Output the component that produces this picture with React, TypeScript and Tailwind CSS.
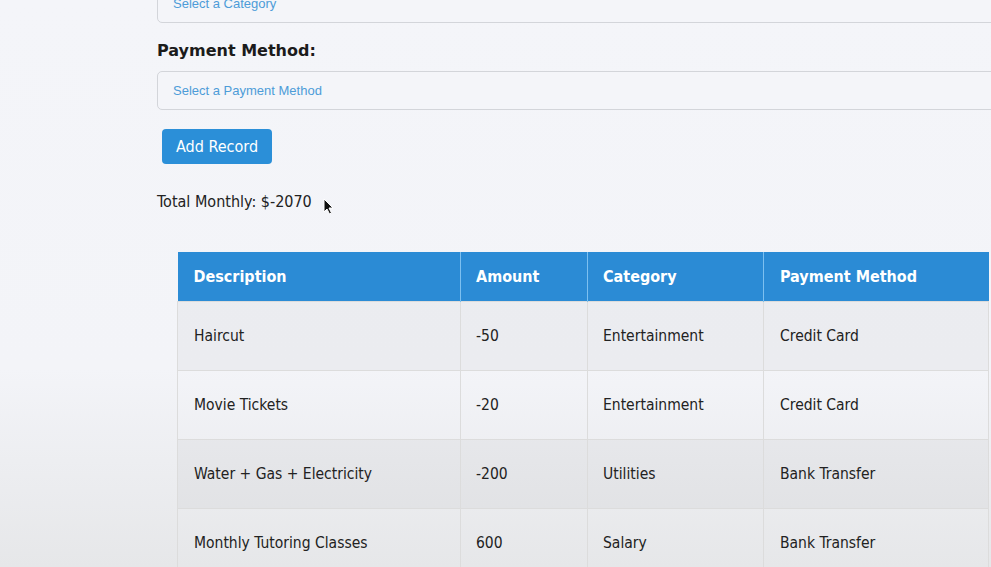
import React from 'react'

const rows = [
  { description: 'Haircut', amount: '-50', category: 'Entertainment', method: 'Credit Card' },
  { description: 'Movie Tickets', amount: '-20', category: 'Entertainment', method: 'Credit Card' },
  { description: 'Water + Gas + Electricity', amount: '-200', category: 'Utilities', method: 'Bank Transfer' },
  { description: 'Monthly Tutoring Classes', amount: '600', category: 'Salary', method: 'Bank Transfer' },
]

const tahoma = { fontFamily: '"DejaVu Sans Condensed", "DejaVu Sans", sans-serif' }

const SelectBox = ({ placeholder, className }: { placeholder: string; className?: string }) => (
  <div
    className={`flex h-[39px] w-[860px] items-center rounded-[5px] border border-[#d3d5da] bg-[#f4f5f9] pl-[15px] text-[13px] text-[#4d9cd8] ${className ?? ''}`}
    style={{ fontFamily: '"Liberation Sans", Arial, sans-serif' }}
  >
    {placeholder}
  </div>
)

export default function App() {
  return (
    <div className="h-[567px] w-[991px] overflow-hidden bg-[linear-gradient(to_bottom,#f4f5f9_0%,#f3f4f8_65%,#e6e7e9_100%)]">
      <div className="-mt-[16px] pl-[157px]">
        <SelectBox placeholder="Select a Category" />

        <div className="mt-[16px] text-[16px] font-bold text-[#1b1b1b]" style={{ fontFamily: '"DejaVu Sans", Verdana, sans-serif' }}>
          Payment Method:
        </div>

        <SelectBox placeholder="Select a Payment Method" className="mt-[8px]" />

        <button
          className="ml-[5px] mt-[19px] flex h-[35px] w-[110px] items-center justify-center rounded-[4px] bg-[#2b8fd8] pt-[1px] text-[16px] text-white"
          style={tahoma}
        >
          Add Record
        </button>

        <div className="mt-[26px] flex h-[24px] items-start text-[16px] leading-[24px] text-[#222]" style={tahoma}>
          <span>Total Monthly: $-2070</span>
          <svg width="12" height="18" viewBox="0 0 12 18" className="ml-[11px] mt-[8px]">
            <path d="M1 1 L1 14 L4 11 L6.5 16 L8.5 15 L6 10 L10 10 Z" fill="#111" stroke="#fff" strokeWidth="1" />
          </svg>
        </div>

        <table className="ml-[20px] mt-[38px] w-[812px] border-collapse text-[15.5px]" style={tahoma}>
          <thead>
            <tr className="h-[49px] bg-[#2b8bd5] text-left text-white">
              <th className="w-[283px] border-r border-[#7dc0f0] pl-[16px] pt-[2px] text-[16px] font-bold">Description</th>
              <th className="w-[127px] border-r border-[#7dc0f0] pl-[15px] pt-[2px] text-[16px] font-bold">Amount</th>
              <th className="w-[176px] border-r border-[#7dc0f0] pl-[15px] pt-[2px] text-[16px] font-bold">Category</th>
              <th className="pl-[16px] pt-[2px] text-[16px] font-bold">Payment Method</th>
            </tr>
          </thead>
          <tbody className="text-[#222]">
            {rows.map((r, i) => (
              <tr
                key={r.description}
                className={`h-[69px] border-t border-[#dcdcdc] ${i % 2 === 0 ? 'bg-black/[0.03]' : 'bg-transparent'}`}
              >
                <td className="border-x border-[#dcdcdc] pl-[16px] pt-[2px]">{r.description}</td>
                <td className="border-r border-[#dcdcdc] pl-[15px] pt-[2px]">{r.amount}</td>
                <td className="border-r border-[#dcdcdc] pl-[15px] pt-[2px]">{r.category}</td>
                <td className="border-r border-[#dcdcdc] pl-[16px] pt-[2px]">{r.method}</td>
              </tr>
            ))}
          </tbody>
        </table>
      </div>
    </div>
  )
}
